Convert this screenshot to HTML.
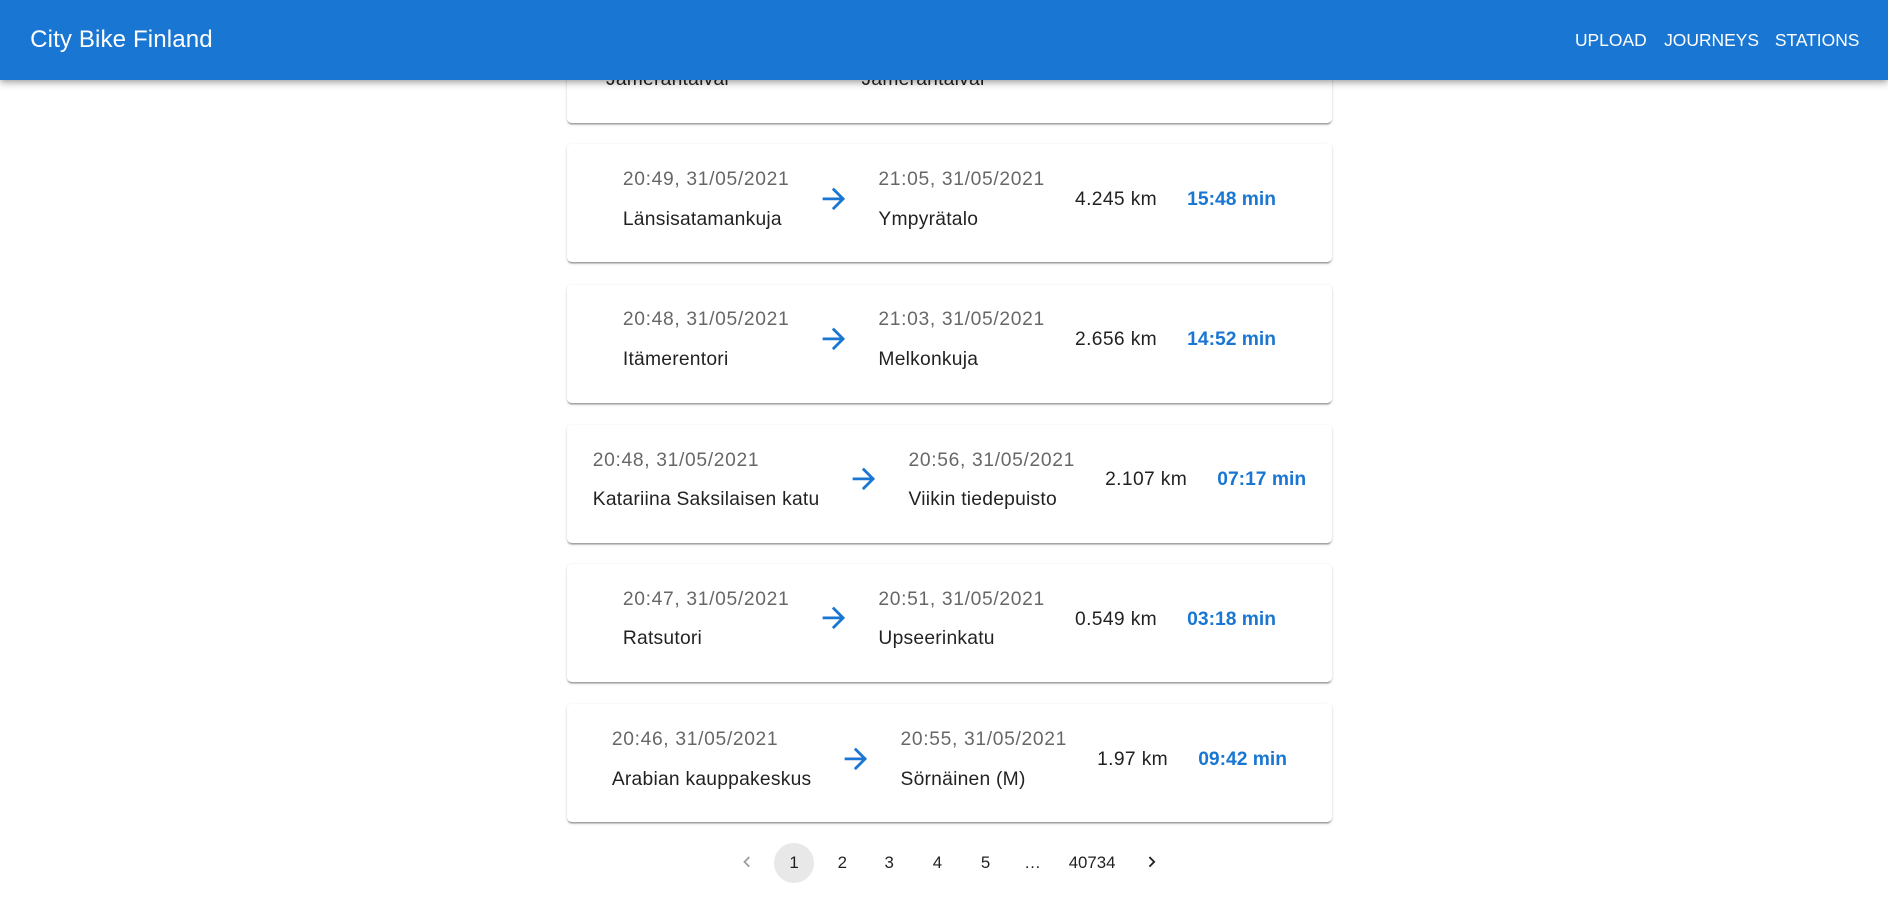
<!DOCTYPE html>
<html><head><meta charset="utf-8"><style>
html,body{margin:0;padding:0;background:#fff;overflow:hidden}
body{zoom:1.2041;width:1568px;height:748px;position:relative;font-family:"Liberation Sans",Arial,sans-serif}
.bar{position:absolute;left:0;top:0;width:1568px;height:66.5px;background:#1976d2;box-shadow:0 2px 4px -1px rgba(0,0,0,.2),0 4px 5px 0 rgba(0,0,0,.14),0 1px 10px 0 rgba(0,0,0,.12);z-index:5;color:#fff}
.title{position:absolute;left:25px;top:22px;font-size:20px;letter-spacing:0.1px}
.nav{position:absolute;top:25px;font-size:14.5px;font-weight:500}
.card{position:absolute;left:471px;width:635px;height:98px;border-radius:4px;background:#fff;box-shadow:0 2px 1px -1px rgba(0,0,0,.2),0 1px 1px 0 rgba(0,0,0,.14),0 1px 3px 0 rgba(0,0,0,.12);display:flex;justify-content:center;align-items:center;font-size:16px}
.col{display:flex;flex-direction:column;height:98px;justify-content:center;margin-top:-6px}
.t{color:rgba(0,0,0,.6);height:33px;line-height:20px;letter-spacing:0.55px}
.n{color:rgba(0,0,0,.87);line-height:20px;letter-spacing:0.2px}
.ar{width:28px;height:28px;margin:0 23px 0 23px;margin-top:-8px}
.km{color:rgba(0,0,0,.87);margin-right:25px;letter-spacing:0.3px;margin-top:-6px}
.min{color:#1976d2;font-weight:bold;margin-top:-6px}
.pg{position:absolute;top:700px;height:33px;font-size:14px;color:rgba(0,0,0,.87);text-align:center;line-height:33px}
</style></head><body>
<div class="bar"><div class="title">City Bike Finland</div>
<div class="nav" style="left:1308px">UPLOAD</div>
<div class="nav" style="left:1382px">JOURNEYS</div>
<div class="nav" style="left:1474px">STATIONS</div></div>

<div class="card" style="top:4px"><div class="col"><div class="t">20:50, 31/05/2021</div><div class="n">Jämerantaival</div></div><svg class="ar" viewBox="0 0 24 24"><path fill="#1976d2" d="M12 4l-1.41 1.41L16.17 11H4v2h12.17l-5.58 5.59L12 20l8-8z"/></svg><div class="col"><div class="t">20:58, 31/05/2021</div><div class="n">Jämerantaival</div></div><div style="width:220px"></div></div>

<div class="card" style="top:120px"><div class="col"><div class="t">20:49, 31/05/2021</div><div class="n">Länsisatamankuja</div></div><svg class="ar" viewBox="0 0 24 24"><path fill="#1976d2" d="M12 4l-1.41 1.41L16.17 11H4v2h12.17l-5.58 5.59L12 20l8-8z"/></svg><div class="col" style="margin-right:25px"><div class="t">21:05, 31/05/2021</div><div class="n">Ympyrätalo</div></div><div class="km">4.245 km</div><div class="min">15:48 min</div></div>

<div class="card" style="top:236.5px"><div class="col"><div class="t">20:48, 31/05/2021</div><div class="n">Itämerentori</div></div><svg class="ar" viewBox="0 0 24 24"><path fill="#1976d2" d="M12 4l-1.41 1.41L16.17 11H4v2h12.17l-5.58 5.59L12 20l8-8z"/></svg><div class="col" style="margin-right:25px"><div class="t">21:03, 31/05/2021</div><div class="n">Melkonkuja</div></div><div class="km">2.656 km</div><div class="min">14:52 min</div></div>

<div class="card" style="top:353px"><div class="col"><div class="t">20:48, 31/05/2021</div><div class="n">Katariina Saksilaisen katu</div></div><svg class="ar" viewBox="0 0 24 24"><path fill="#1976d2" d="M12 4l-1.41 1.41L16.17 11H4v2h12.17l-5.58 5.59L12 20l8-8z"/></svg><div class="col" style="margin-right:25px"><div class="t">20:56, 31/05/2021</div><div class="n">Viikin tiedepuisto</div></div><div class="km">2.107 km</div><div class="min">07:17 min</div></div>

<div class="card" style="top:468.5px"><div class="col"><div class="t">20:47, 31/05/2021</div><div class="n">Ratsutori</div></div><svg class="ar" viewBox="0 0 24 24"><path fill="#1976d2" d="M12 4l-1.41 1.41L16.17 11H4v2h12.17l-5.58 5.59L12 20l8-8z"/></svg><div class="col" style="margin-right:25px"><div class="t">20:51, 31/05/2021</div><div class="n">Upseerinkatu</div></div><div class="km">0.549 km</div><div class="min">03:18 min</div></div>

<div class="card" style="top:585px"><div class="col"><div class="t">20:46, 31/05/2021</div><div class="n">Arabian kauppakeskus</div></div><svg class="ar" viewBox="0 0 24 24"><path fill="#1976d2" d="M12 4l-1.41 1.41L16.17 11H4v2h12.17l-5.58 5.59L12 20l8-8z"/></svg><div class="col" style="margin-right:25px"><div class="t">20:55, 31/05/2021</div><div class="n">Sörnäinen (M)</div></div><div class="km">1.97 km</div><div class="min">09:42 min</div></div>

<svg style="position:absolute;left:611px;top:707px" width="18" height="18" viewBox="0 0 24 24"><path fill="rgba(0,0,0,.38)" d="M15.41 7.41L14 6l-6 6 6 6 1.41-1.41L10.83 12z"/></svg>
<div class="pg" style="left:643px;width:33px;border-radius:50%;background:#e8e8e8">1</div>
<div class="pg" style="left:683px;width:33px">2</div>
<div class="pg" style="left:722px;width:33px">3</div>
<div class="pg" style="left:762px;width:33px">4</div>
<div class="pg" style="left:802px;width:33px">5</div>
<div class="pg" style="left:841px;width:33px">…</div>
<div class="pg" style="left:882px;width:50px">40734</div>
<svg style="position:absolute;left:948px;top:707px" width="18" height="18" viewBox="0 0 24 24"><path fill="rgba(0,0,0,.87)" d="M10 6L8.59 7.41 13.17 12l-4.58 4.59L10 18l6-6z"/></svg>
</body></html>
